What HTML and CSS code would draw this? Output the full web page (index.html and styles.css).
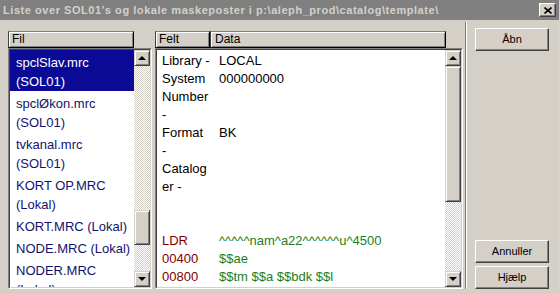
FILE: index.html
```html
<!doctype html>
<html>
<head>
<meta charset="utf-8">
<title>Liste over SOL01's og lokale maskeposter</title>
<link rel="stylesheet" href="styles.css">
</head>

<body>
<div id="dialog">
    <div class="caption">
        <span class="caption_text">Liste over SOL01's og lokale maskeposter i p:\aleph_prod\catalog\template\</span>
        <a href="javascript:;" class="close">
            <svg width="8" height="7" viewBox="0 0 8 7"><path d="M0.5 0.5L7.5 6.5M7.5 0.5L0.5 6.5" stroke="#000" stroke-width="1.6"/></svg>
        </a>
    </div>

    <div class="main">
        <!-- filer -->
        <div class="pane files">
            <div class="header"><span class="col fil">Fil</span></div>
            <div class="box">
                <div class="box_in">
                    <ul class="list">
                        <li class="sel">spclSlav.mrc<br>(SOL01)</li>
                        <li>spclØkon.mrc<br>(SOL01)</li>
                        <li>tvkanal.mrc<br>(SOL01)</li>
                        <li>KORT OP.MRC<br>(Lokal)</li>
                        <li>KORT.MRC (Lokal)</li>
                        <li>NODE.MRC (Lokal)</li>
                        <li>NODER.MRC<br>(Lokal)</li>
                    </ul>
                    <div class="scroll">
                        <span class="sbtn"><i class="arr up"></i></span>
                        <span class="track t1"></span>
                        <span class="thumb th1"></span>
                        <span class="track"></span>
                        <span class="sbtn"><i class="arr down"></i></span>
                    </div>
                </div>
            </div>
        </div>

        <!-- post -->
        <div class="pane rec">
            <div class="header">
                <span class="col felt">Felt</span>
                <span class="col data">Data</span>
            </div>
            <div class="box">
                <div class="box_in">
                    <div class="fields">
                        <div class="row"><span class="tag">Library -</span><span>LOCAL</span></div>
                        <div class="row"><span class="tag">System<br>Number<br>-</span><span>000000000</span></div>
                        <div class="row"><span class="tag">Format<br>-</span><span>BK</span></div>
                        <div class="row"><span class="tag">Catalog<br>er -</span><span></span></div>
                        <div class="blank"></div>
                        <div class="row marc"><span class="tag">LDR</span><span>^^^^^nam^a22^^^^^^u^4500</span></div>
                        <div class="row marc"><span class="tag">00400</span><span>$$ae</span></div>
                        <div class="row marc"><span class="tag">00800</span><span>$$tm $$a $$bdk $$l</span></div>
                    </div>
                    <div class="scroll">
                        <span class="sbtn"><i class="arr up"></i></span>
                        <span class="thumb th2"></span>
                        <span class="track"></span>
                        <span class="sbtn"><i class="arr down"></i></span>
                    </div>
                </div>
            </div>
        </div>

        <div class="sep"></div>

        <div class="buttons">
            <a href="javascript:;" class="btn">Åbn</a>
            <a href="javascript:;" class="btn cancel">Annuller</a>
            <a href="javascript:;" class="btn">Hjælp</a>
        </div>
    </div>
</div>
</body>
</html>
```

FILE: styles.css
```css
*{box-sizing:border-box;}
body,div,span,ul,li,a,i{margin:0; padding:0;}
body{
	margin:0;
	font-family:'Liberation Sans', Arial, sans-serif;
	background:#d4d0c8;
}
#dialog{
	display:flex;
	flex-direction:column;
	width:559px;
	height:294px;
	overflow:hidden;
	background:#d4d0c8;
}

/* titellinje (inaktiv) */
.caption{
	display:flex;
	align-items:center;
	justify-content:space-between;
	height:20px;
	padding:0 3px 0 3px;
	background:#808080;
	color:#d4d0c8;
	font-size:11px;
	font-weight:bold;
	letter-spacing:0.55px;
	white-space:nowrap;
}
.close{
	display:flex;
	align-items:center;
	justify-content:center;
	width:17px;
	height:14px;
	background:#d4d0c8;
	border:1px solid;
	border-color:#fff #404040 #404040 #fff;
	box-shadow:inset -1px -1px #808080;
}

.main{
	flex:1;
	display:flex;
	padding:0 10px 5px 8px;
}
.pane{
	display:flex;
	flex-direction:column;
	padding-top:11px;
}
.files{width:144px;}
.rec{width:308px; margin-left:3px;}

/* kolonneoverskrifter */
.header{display:flex; height:17px;}
.col{
	height:17px;
	padding-left:3px;
	font-size:12px;
	line-height:15px;
	color:#000;
	border:1px solid;
	border-color:#808080 #000 #000 #404040;
	box-shadow:inset 1px 1px #fff, inset -1px -1px #808080;
}
.fil{width:126px;}
.felt{width:55px;}
.data{width:236px; padding-left:4px;}

/* nedsænket liste */
.box{
	height:241px;
	border:1px solid;
	border-color:#808080 #fff #fff #808080;
}
.box_in{
	display:flex;
	height:100%;
	overflow:hidden;
	background:#fff;
	border:1px solid;
	border-color:#404040 #d4d0c8 #d4d0c8 #404040;
}

.list{
	flex:1;
	list-style:none;
	font-size:13px;
	line-height:19px;
	color:#12126e;
}
.list li{padding:3px 0 0 6px; white-space:nowrap;}
.list .sel{background:#0a0a96; color:#fff;}

.fields{
	flex:1;
	padding:2px 0 0 5px;
	font-size:13px;
	line-height:18px;
	color:#000;
}
.row{display:flex; white-space:nowrap;}
.tag{flex:0 0 57px;}
.blank{height:36px;}
.marc .tag{color:#800000;}
.marc span + span{color:#1a801a;}

/* rullebjælke */
.scroll{
	display:flex;
	flex-direction:column;
	flex:0 0 16px;
}
.sbtn, .thumb{
	display:flex;
	align-items:center;
	justify-content:center;
	background:#d4d0c8;
	border:1px solid;
	border-color:#d4d0c8 #404040 #404040 #d4d0c8;
	box-shadow:inset 1px 1px #fff, inset -1px -1px #808080;
}
.sbtn{flex:0 0 16px;}
.track{
	flex:1;
	background:repeating-conic-gradient(#fff 0 25%, #d4d0c8 0 50%) 0 0/2px 2px;
}
.t1{flex:0 0 144px;}
.th1{flex:0 0 35px;}
.th2{flex:0 0 136px;}
.arr{width:0; height:0; border-left:4px solid transparent; border-right:4px solid transparent;}
.arr.up{border-bottom:4px solid #000;}
.arr.down{border-top:4px solid #000;}

.sep{
	width:2px;
	margin:2px 0 0 2px;
	border-left:1px solid #808080;
	border-right:1px solid #fff;
}

/* knapper */
.buttons{
	display:flex;
	flex-direction:column;
	gap:3px;
	width:74px;
	margin-left:8px;
	padding-top:8px;
}
.btn{
	display:block;
	height:23px;
	line-height:21px;
	text-align:center;
	font-size:11px;
	color:#000;
	text-decoration:none;
	border:1px solid;
	border-color:#fff #404040 #404040 #fff;
	box-shadow:inset -1px -1px #808080;
}
.cancel{margin-top:auto;}
```
